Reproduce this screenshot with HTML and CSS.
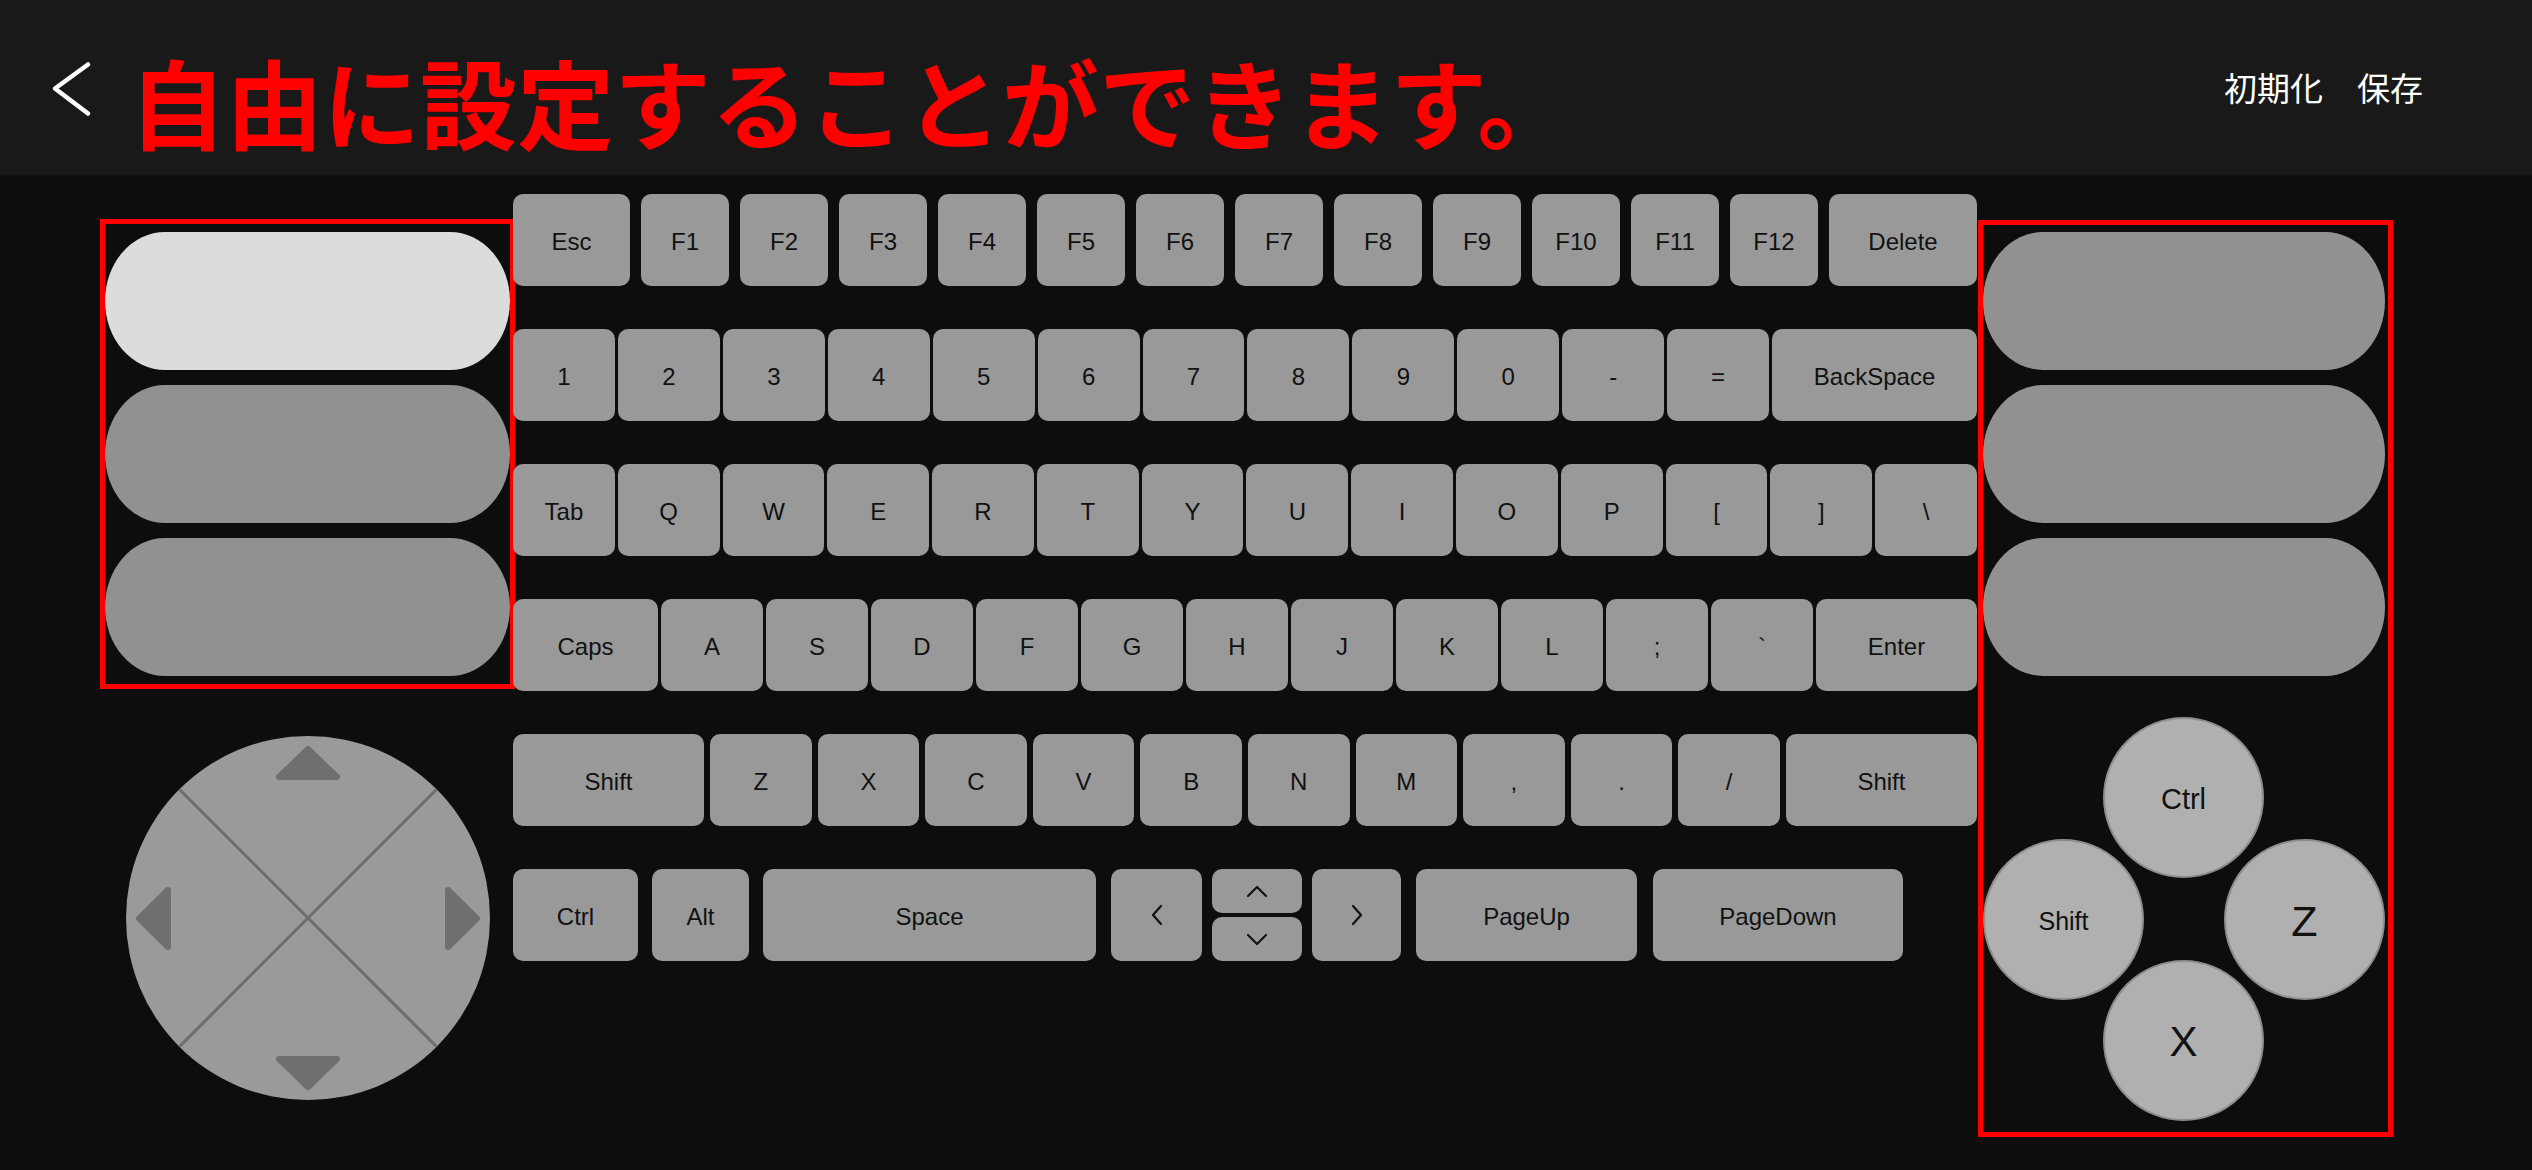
FILE: index.html
```html
<!DOCTYPE html>
<html lang="ja">
<head>
<meta charset="utf-8">
<title>キー設定</title>
<link rel="stylesheet" href="styles.css">
</head>
<body>
<header class="topbar">
  <svg class="back" width="44" height="60" viewBox="0 0 44 60" aria-hidden="true">
    <polyline points="38,6.5 5,30.5 38,55.5" fill="none" stroke="#ffffff" stroke-width="4.5" stroke-linecap="round" stroke-linejoin="round"/>
  </svg>
  <h1 class="title">自由に設定することができます。</h1>
  <nav class="actions">
    <span class="action">初期化</span>
    <span class="action">保存</span>
  </nav>
</header>

<main class="stage">
  <section class="left-col">
    <div class="frame frame-left">
      <div class="pill pill-active"></div>
      <div class="pill"></div>
      <div class="pill"></div>
    </div>
    <div class="dpad">
      <svg width="364" height="364" viewBox="0 0 364 364" aria-hidden="true">
        <circle cx="182" cy="182" r="182" fill="#9a9a9a"/>
        <line x1="53.3" y1="53.3" x2="310.7" y2="310.7" stroke="#6d6d6d" stroke-width="3"/>
        <line x1="310.7" y1="53.3" x2="53.3" y2="310.7" stroke="#6d6d6d" stroke-width="3"/>
        <g fill="#6f6f6f" stroke="#6f6f6f" stroke-width="6" stroke-linejoin="round">
          <polygon points="182,13 211,41 153,41"/>
          <polygon points="153,323 211,323 182,351"/>
          <polygon points="13,182.5 42,154 42,211"/>
          <polygon points="322,154 322,211 351,182.5"/>
        </g>
      </svg>
    </div>
  </section>

  <section class="keyboard">
    <div class="row row-fn">
      <div class="key k-esc">Esc</div>
      <div class="key">F1</div>
      <div class="key">F2</div>
      <div class="key">F3</div>
      <div class="key">F4</div>
      <div class="key">F5</div>
      <div class="key">F6</div>
      <div class="key">F7</div>
      <div class="key">F8</div>
      <div class="key">F9</div>
      <div class="key">F10</div>
      <div class="key">F11</div>
      <div class="key">F12</div>
      <div class="key k-del">Delete</div>
    </div>
    <div class="row row-num">
      <div class="key">1</div>
      <div class="key">2</div>
      <div class="key">3</div>
      <div class="key">4</div>
      <div class="key">5</div>
      <div class="key">6</div>
      <div class="key">7</div>
      <div class="key">8</div>
      <div class="key">9</div>
      <div class="key">0</div>
      <div class="key">-</div>
      <div class="key">=</div>
      <div class="key k-bs">BackSpace</div>
    </div>
    <div class="row row-top">
      <div class="key">Tab</div>
      <div class="key">Q</div>
      <div class="key">W</div>
      <div class="key">E</div>
      <div class="key">R</div>
      <div class="key">T</div>
      <div class="key">Y</div>
      <div class="key">U</div>
      <div class="key">I</div>
      <div class="key">O</div>
      <div class="key">P</div>
      <div class="key">[</div>
      <div class="key">]</div>
      <div class="key">\</div>
    </div>
    <div class="row row-home">
      <div class="key k-caps">Caps</div>
      <div class="key">A</div>
      <div class="key">S</div>
      <div class="key">D</div>
      <div class="key">F</div>
      <div class="key">G</div>
      <div class="key">H</div>
      <div class="key">J</div>
      <div class="key">K</div>
      <div class="key">L</div>
      <div class="key">;</div>
      <div class="key">`</div>
      <div class="key k-enter">Enter</div>
    </div>
    <div class="row row-bottom">
      <div class="key k-shift">Shift</div>
      <div class="key">Z</div>
      <div class="key">X</div>
      <div class="key">C</div>
      <div class="key">V</div>
      <div class="key">B</div>
      <div class="key">N</div>
      <div class="key">M</div>
      <div class="key">,</div>
      <div class="key">.</div>
      <div class="key">/</div>
      <div class="key k-shift">Shift</div>
    </div>
    <div class="row row-mod">
      <div class="key k-ctrl">Ctrl</div>
      <div class="key k-alt">Alt</div>
      <div class="key k-space">Space</div>
      <div class="arrows">
        <div class="key k-left">
          <svg width="14" height="22" viewBox="0 0 14 22" aria-hidden="true"><polyline points="11,2 3,11 11,20" fill="none" stroke="#111" stroke-width="2.2" stroke-linecap="round" stroke-linejoin="round"/></svg>
        </div>
        <div class="updown">
          <div class="key k-half">
            <svg width="22" height="13" viewBox="0 0 22 13" aria-hidden="true"><polyline points="2,11 11,2 20,11" fill="none" stroke="#111" stroke-width="2.2" stroke-linecap="round" stroke-linejoin="round"/></svg>
          </div>
          <div class="key k-half">
            <svg width="22" height="13" viewBox="0 0 22 13" aria-hidden="true"><polyline points="2,2 11,11 20,2" fill="none" stroke="#111" stroke-width="2.2" stroke-linecap="round" stroke-linejoin="round"/></svg>
          </div>
        </div>
        <div class="key k-right">
          <svg width="14" height="22" viewBox="0 0 14 22" aria-hidden="true"><polyline points="3,2 11,11 3,20" fill="none" stroke="#111" stroke-width="2.2" stroke-linecap="round" stroke-linejoin="round"/></svg>
        </div>
      </div>
      <div class="key k-pgup">PageUp</div>
      <div class="key k-pgdn">PageDown</div>
    </div>
  </section>

  <section class="right-col">
    <div class="frame frame-right">
      <div class="pill"></div>
      <div class="pill"></div>
      <div class="pill"></div>
      <div class="cluster">
        <div class="btn btn-ctrl">Ctrl</div>
        <div class="btn btn-shift">Shift</div>
        <div class="btn btn-z">Z</div>
        <div class="btn btn-x">X</div>
      </div>
    </div>
  </section>
</main>
</body>
</html>
```

FILE: styles.css
```css
* { box-sizing: border-box; }

html, body {
  margin: 0;
  padding: 0;
}

body {
  width: 2532px;
  height: 1170px;
  overflow: hidden;
  background: #0d0d0d;
  font-family: "Liberation Sans", Arial, sans-serif;
  color: #111;
}

/* ---------- header ---------- */
.topbar {
  height: 175px;
  background: #191919;
  display: flex;
  align-items: center;
  padding-left: 50px;
  padding-right: 109px;
}

.back {
  flex: none;
  display: block;
}

.title {
  margin: 0 0 0 35px;
  padding-top: 24px;
  font-family: "Noto Sans CJK JP", "Noto Sans CJK SC", sans-serif;
  font-weight: 700;
  font-size: 97px;
  line-height: 1;
  color: #ff0000;
  white-space: nowrap;
}

.actions {
  margin-left: auto;
  display: flex;
  gap: 34px;
}

.action {
  font-family: "Noto Sans CJK JP", "Noto Sans CJK SC", sans-serif;
  font-weight: 400;
  font-size: 33px;
  line-height: 1;
  color: #ffffff;
}

/* ---------- stage ---------- */
.stage {
  display: flex;
  align-items: flex-start;
  padding-left: 100px;
  padding-top: 19px;
}

.left-col {
  width: 415px;
  flex: none;
  margin-top: 25px;
  display: flex;
  flex-direction: column;
  align-items: center;
}

.frame {
  border: 5px solid #ff0000;
  display: flex;
  flex-direction: column;
  gap: 15px;
}

.frame-left {
  width: 415px;
  padding: 8px 0;
}

.pill {
  height: 138px;
  background: #919191;
  border-radius: 60px / 69px;
}

.pill-active {
  background: #dcdcdc;
}

.dpad {
  margin-top: 47px;
  width: 364px;
  height: 364px;
}

.dpad svg { display: block; }

/* ---------- keyboard ---------- */
.keyboard {
  width: 1464px;
  flex: none;
  margin-left: -2px;
  display: flex;
  flex-direction: column;
  gap: 43px;
}

.row {
  display: flex;
  height: 92px;
}

.key {
  flex: 1 1 0;
  min-width: 0;
  height: 92px;
  padding-top: 3px;
  background: #999999;
  border-radius: 10px;
  display: flex;
  align-items: center;
  justify-content: center;
  font-size: 24px;
  color: #111;
  white-space: nowrap;
}

.row-fn { gap: 11px; }
.k-esc { flex: 0 0 117px; }
.k-del { flex: 0 0 148px; }

.row-num { gap: 3px; }
.k-bs { flex: 0 0 205px; }

.row-top { gap: 3px; }

.row-home { gap: 3px; }
.k-caps { flex: 0 0 145px; }
.k-enter { flex: 0 0 161px; }

.row-bottom { gap: 6px; }
.k-shift { flex: 0 0 191px; }

.row-mod { gap: 14px; }
.k-ctrl { flex: 0 0 125px; }
.k-alt { flex: 0 0 97px; }
.k-space { flex: 0 0 333px; }
.arrows {
  flex: none;
  display: flex;
  gap: 10px;
  margin-left: 1px;
}
.k-left { flex: 0 0 91px; padding-top: 0; }
.k-right { flex: 0 0 89px; padding-top: 0; }
.updown {
  width: 90px;
  display: flex;
  flex-direction: column;
  gap: 4px;
}
.k-half {
  flex: none;
  height: 44px;
  padding-top: 0;
}
.k-pgup { flex: 0 0 221px; margin-left: 1px; }
.k-pgdn { flex: 0 0 250px; margin-left: 2px; }

.key svg { display: block; }

/* ---------- right column ---------- */
.right-col {
  width: 415px;
  flex: none;
  margin-left: 1px;
  margin-top: 26px;
}

.frame-right {
  width: 415px;
  padding: 7px 3px 11px 0;
}

.cluster {
  margin-top: 26px;
  display: grid;
  grid-template-columns: 120px 41px 80px 40px 121px;
  grid-template-rows: 122px 39px 82px 40px 121px;
}

.btn {
  border-radius: 50%;
  background: #b0b0b0;
  border: 2px solid #8c8c8c;
  padding-top: 3px;
  display: flex;
  align-items: center;
  justify-content: center;
  color: #111;
}

.btn-ctrl { grid-column: 2 / 5; grid-row: 1 / 3; font-size: 29px; }
.btn-shift { grid-column: 1 / 3; grid-row: 2 / 5; font-size: 25px; }
.btn-z { grid-column: 4 / 6; grid-row: 2 / 5; font-size: 43px; }
.btn-x { grid-column: 2 / 5; grid-row: 4 / 6; font-size: 42px; }
```
